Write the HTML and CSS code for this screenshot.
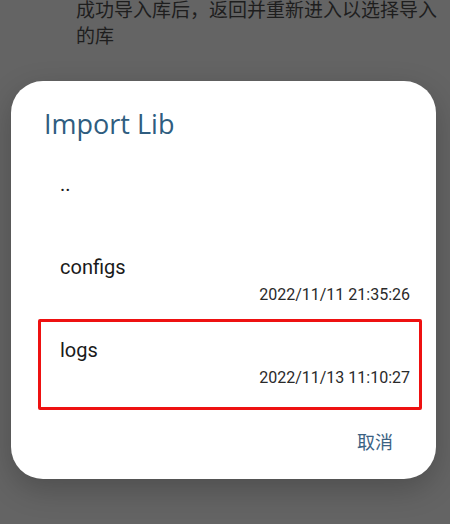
FILE: index.html
```html
<!DOCTYPE html>
<html lang="zh">
<head>
<meta charset="utf-8">
<link rel="stylesheet" href="styles.css">
</head>
<body>
  <p class="hint">成功导入库后，返回并重新进入以选择导入的库</p>
  <div class="dialog">
    <h1 class="title">Import Lib</h1>
    <div class="list">
      <div class="item">
        <div class="name">..</div>
        <div class="date">&nbsp;</div>
      </div>
      <div class="item">
        <div class="name">configs</div>
        <div class="date">2022/11/11 21:35:26</div>
      </div>
      <div class="item item-marked">
        <div class="name">logs</div>
        <div class="date">2022/11/13 11:10:27</div>
      </div>
    </div>
    <div class="actions">
      <span class="btn">取消</span>
    </div>
  </div>
</body>
</html>
```
FILE: styles.css
```css
html, body {
  margin: 0;
  padding: 0;
  width: 450px;
  height: 524px;
  overflow: hidden;
  background: #646464;
}

.hint {
  margin: -4px 10px 0 76px;
  font-family: "Noto Sans CJK SC", sans-serif;
  font-size: 19px;
  line-height: 26px;
  color: #1e1e1e;
}

.dialog {
  margin: 33px 14px 0 11px;
  background: #ffffff;
  border-radius: 32px;
  padding: 27px 0 26px 0;
  box-shadow: 0 10px 30px rgba(0, 0, 0, 0.22);
}

.title {
  margin: 0 0 17px 33px;
  font-family: "Open Sans", sans-serif;
  font-weight: 400;
  font-size: 27px;
  line-height: 32px;
  color: #2f5d80;
}

.item {
  position: relative;
  padding: 14px 26px 17px 49px;
  font-family: Roboto, sans-serif;
  color: #1a1a1a;
}

.name {
  font-size: 20px;
  line-height: 26px;
}

.date {
  margin-top: 4px;
  font-size: 16px;
  line-height: 22px;
  text-align: right;
  color: #2a2a2a;
}

.item-marked::after {
  content: "";
  position: absolute;
  left: 27px;
  right: 14px;
  top: -4px;
  bottom: -4px;
  border: 3px solid #ee1111;
  border-radius: 2px;
}

.actions {
  display: flex;
  justify-content: flex-end;
  margin-top: 23px;
  padding-right: 43px;
}

.btn {
  font-family: "Noto Sans CJK SC", sans-serif;
  font-size: 18px;
  line-height: 24px;
  color: #3b6283;
}
```
